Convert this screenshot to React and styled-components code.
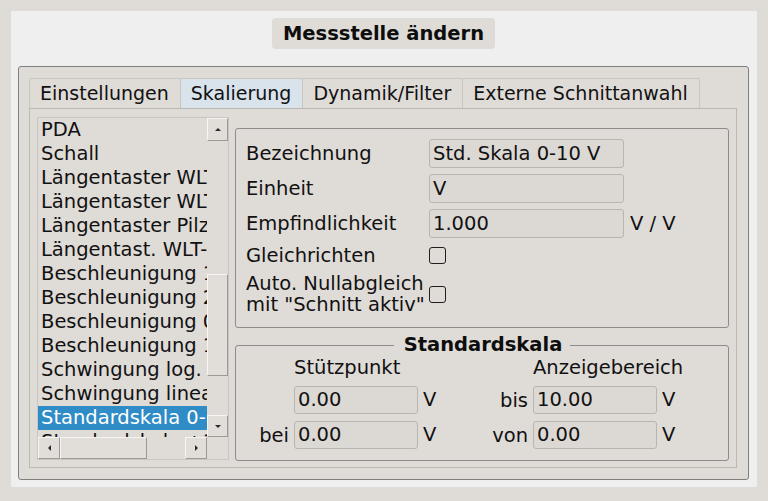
import React from "react";
import styled, { createGlobalStyle } from "styled-components";

const GlobalStyle = createGlobalStyle`
  html, body {
    margin: 0;
    padding: 0;
    background: #dfdbd7;
  }
  body {
    font-family: "DejaVu Sans", "Liberation Sans", sans-serif;
    font-size: 19.5px;
    color: #111;
  }
  * {
    box-sizing: border-box;
  }
`;

const Window = styled.div`
  margin: 11px;
  width: 746px;
  height: 476px;
  padding: 7px 8px 7px 7px;
  background: #efefef;
  display: flex;
  flex-direction: column;
  align-items: center;
`;

const Title = styled.h1`
  margin: 0;
  height: 31px;
  padding: 0 11px;
  background: #dfdbd7;
  border-radius: 4px;
  font-size: 19.5px;
  font-weight: bold;
  line-height: 31px;
  color: #0d0d0d;
`;

const Frame = styled.div`
  margin-top: 17px;
  align-self: stretch;
  flex: 1;
  min-height: 0;
  border: 1px solid #7f7f7f;
  border-radius: 3px;
  background: #dfdbd7;
  padding: 11px 11px 11px 10px;
  display: flex;
  flex-direction: column;
`;

const TabBar = styled.div`
  display: flex;
  height: 30px;
`;

const Tab = styled.div`
  padding: 0 11px 0 10px;
  height: 30px;
  font-size: 19px;
  line-height: 29px;
  border: 1px solid #c9c5c1;
  border-bottom: none;
  margin-right: -1px;
  border-radius: 2px 2px 0 0;
  background: ${({ $active }) => ($active ? "#d9e3ec" : "#dfdbd7")};
  white-space: nowrap;
`;

const Pane = styled.div`
  flex: 1;
  min-height: 0;
  border: 1px solid #bcb8b4;
  padding: 8px 7px 7px 7px;
  display: flex;
  gap: 6px;
`;

const ListBox = styled.div`
  width: 192px;
  flex: none;
  border: 1px solid #c9c5c1;
  display: grid;
  grid-template-columns: 1fr 21px;
  grid-template-rows: 1fr 22px;
`;

const Items = styled.div`
  overflow: hidden;
`;

const Item = styled.div`
  height: 24px;
  line-height: 23px;
  padding-left: 3px;
  white-space: nowrap;
  background: ${({ $selected }) => ($selected ? "#308cc6" : "transparent")};
  color: ${({ $selected }) => ($selected ? "#fff" : "#111")};
`;

const VScroll = styled.div`
  display: flex;
  flex-direction: column;
`;

const HScroll = styled.div`
  display: flex;
`;

const ScrollButton = styled.div`
  flex: 0 0 ${({ $size }) => $size}px;
  display: flex;
  align-items: center;
  justify-content: center;
  background: #e1ddd9;
  border: 1px solid;
  border-color: #f7f5f3 #9d9995 #9d9995 #f7f5f3;
`;

const Track = styled.div`
  flex: 1;
  display: flex;
  flex-direction: ${({ $vertical }) => ($vertical ? "column" : "row")};
`;

const Thumb = styled.div`
  flex: 0 0 ${({ $size }) => $size}px;
  margin-${({ $vertical }) => ($vertical ? "top" : "left")}: ${({ $offset }) => $offset}px;
  background: #e1ddd9;
  border: 1px solid;
  border-color: #f7f5f3 #9d9995 #9d9995 #f7f5f3;
`;

const arrowBorders = {
  up: "border-width: 0 3px 3px 3px; border-color: transparent transparent #2b2b2b transparent;",
  down: "border-width: 3px 3px 0 3px; border-color: #2b2b2b transparent transparent transparent;",
  left: "border-width: 3px 3px 3px 0; border-color: transparent #2b2b2b transparent transparent;",
  right: "border-width: 3px 0 3px 3px; border-color: transparent transparent transparent #2b2b2b;",
};

const Arrow = styled.span`
  width: 0;
  height: 0;
  border-style: solid;
  ${({ $dir }) => arrowBorders[$dir]}
`;

const Corner = styled.div``;

const RightColumn = styled.div`
  flex: 1;
  display: flex;
  flex-direction: column;
  padding-top: 11px;
`;

const SettingsGroup = styled.div`
  border: 1px solid #8c8c8c;
  border-radius: 3px;
  padding: 10px 10px 11px 10px;
  display: grid;
  grid-template-columns: 177px 195px auto;
  grid-template-rows: 29px 29px 29px 22px 44px;
  column-gap: 6px;
  row-gap: 6px;
`;

const Label = styled.div`
  line-height: 21px;
  align-self: center;
  text-align: ${({ $right }) => ($right ? "right" : "left")};
  white-space: nowrap;
`;

const Field = styled.div`
  height: ${({ $h }) => $h || 29}px;
  border: 1px solid #b8b4b0;
  border-radius: 3px;
  background: #dcd8d4;
  padding: 0 3px;
  line-height: ${({ $h }) => ($h || 29) - 2}px;
  white-space: nowrap;
  overflow: hidden;
`;

const Unit = styled.div`
  line-height: 22px;
  align-self: center;
`;

const CheckBox = styled.div`
  width: 17px;
  height: 17px;
  border: 1.5px solid #1e1e1e;
  border-radius: 3px;
  align-self: center;
`;

const GroupBox = styled.fieldset`
  margin: 6px 0 0 0;
  padding: 1px 0 11px 0;
  min-width: 0;
  border: 1px solid #8c8c8c;
  border-radius: 3px;
`;

const Legend = styled.legend`
  margin: 0 auto;
  padding: 0 8px 0 10px;
  font-weight: bold;
  line-height: 22px;
  color: #0d0d0d;
`;

const ScaleGrid = styled.div`
  display: grid;
  grid-template-columns: 53px 124px 40px 60px 124px auto;
  grid-template-rows: 22px 28px 28px;
  column-gap: 5px;
  row-gap: 7px;
`;

const ColumnHead = styled.div`
  grid-column: ${({ $col }) => $col} / span 2;
  line-height: 22px;
  white-space: nowrap;
`;

const items = [
  "PDA",
  "Schall",
  "Längentaster WLT 10",
  "Längentaster WLT 20",
  "Längentaster Pilz",
  "Längentast. WLT-Pilz",
  "Beschleunigung 100 mV/g",
  "Beschleunigung 2 mV/g",
  "Beschleunigung 0.5 mV/g",
  "Beschleunigung 10 mV/g",
  "Schwingung log.",
  "Schwingung linear",
  "Standardskala 0-10 V",
  "Standardskala ±10 V",
];

const tabs = ["Einstellungen", "Skalierung", "Dynamik/Filter", "Externe Schnittanwahl"];

const App = () => {
  const selected = 12;

  return (
    <>
      <GlobalStyle />
      <Window>
        <Title>Messstelle ändern</Title>
        <Frame>
          <TabBar>
            {tabs.map((t) => (
              <Tab key={t} $active={t === "Skalierung"}>
                {t}
              </Tab>
            ))}
          </TabBar>
          <Pane>
            <ListBox>
              <Items>
                {items.map((it, i) => (
                  <Item key={i} $selected={i === selected}>
                    {it}
                  </Item>
                ))}
              </Items>
              <VScroll>
                <ScrollButton $size={23}>
                  <Arrow $dir="up" />
                </ScrollButton>
                <Track $vertical>
                  <Thumb $vertical $offset={133} $size={102} />
                </Track>
                <ScrollButton $size={22}>
                  <Arrow $dir="down" />
                </ScrollButton>
              </VScroll>
              <HScroll>
                <ScrollButton $size={22}>
                  <Arrow $dir="left" />
                </ScrollButton>
                <Track>
                  <Thumb $offset={0} $size={87} />
                </Track>
                <ScrollButton $size={22}>
                  <Arrow $dir="right" />
                </ScrollButton>
              </HScroll>
              <Corner />
            </ListBox>

            <RightColumn>
              <SettingsGroup>
                <Label>Bezeichnung</Label>
                <Field>Std. Skala 0-10 V</Field>
                <span />

                <Label>Einheit</Label>
                <Field>V</Field>
                <span />

                <Label>Empfindlichkeit</Label>
                <Field>1.000</Field>
                <Unit>V / V</Unit>

                <Label>Gleichrichten</Label>
                <CheckBox />
                <span />

                <Label>
                  Auto. Nullabgleich
                  <br />
                  mit "Schnitt aktiv"
                </Label>
                <CheckBox />
                <span />
              </SettingsGroup>

              <GroupBox>
                <Legend>Standardskala</Legend>
                <ScaleGrid>
                  <span />
                  <ColumnHead $col={2}>Stützpunkt</ColumnHead>
                  <ColumnHead $col={5}>Anzeigebereich</ColumnHead>

                  <span />
                  <Field $h={28}>0.00</Field>
                  <Unit>V</Unit>
                  <Label $right>bis</Label>
                  <Field $h={28}>10.00</Field>
                  <Unit>V</Unit>

                  <Label $right>bei</Label>
                  <Field $h={28}>0.00</Field>
                  <Unit>V</Unit>
                  <Label $right>von</Label>
                  <Field $h={28}>0.00</Field>
                  <Unit>V</Unit>
                </ScaleGrid>
              </GroupBox>
            </RightColumn>
          </Pane>
        </Frame>
      </Window>
    </>
  );
};

export default App;
